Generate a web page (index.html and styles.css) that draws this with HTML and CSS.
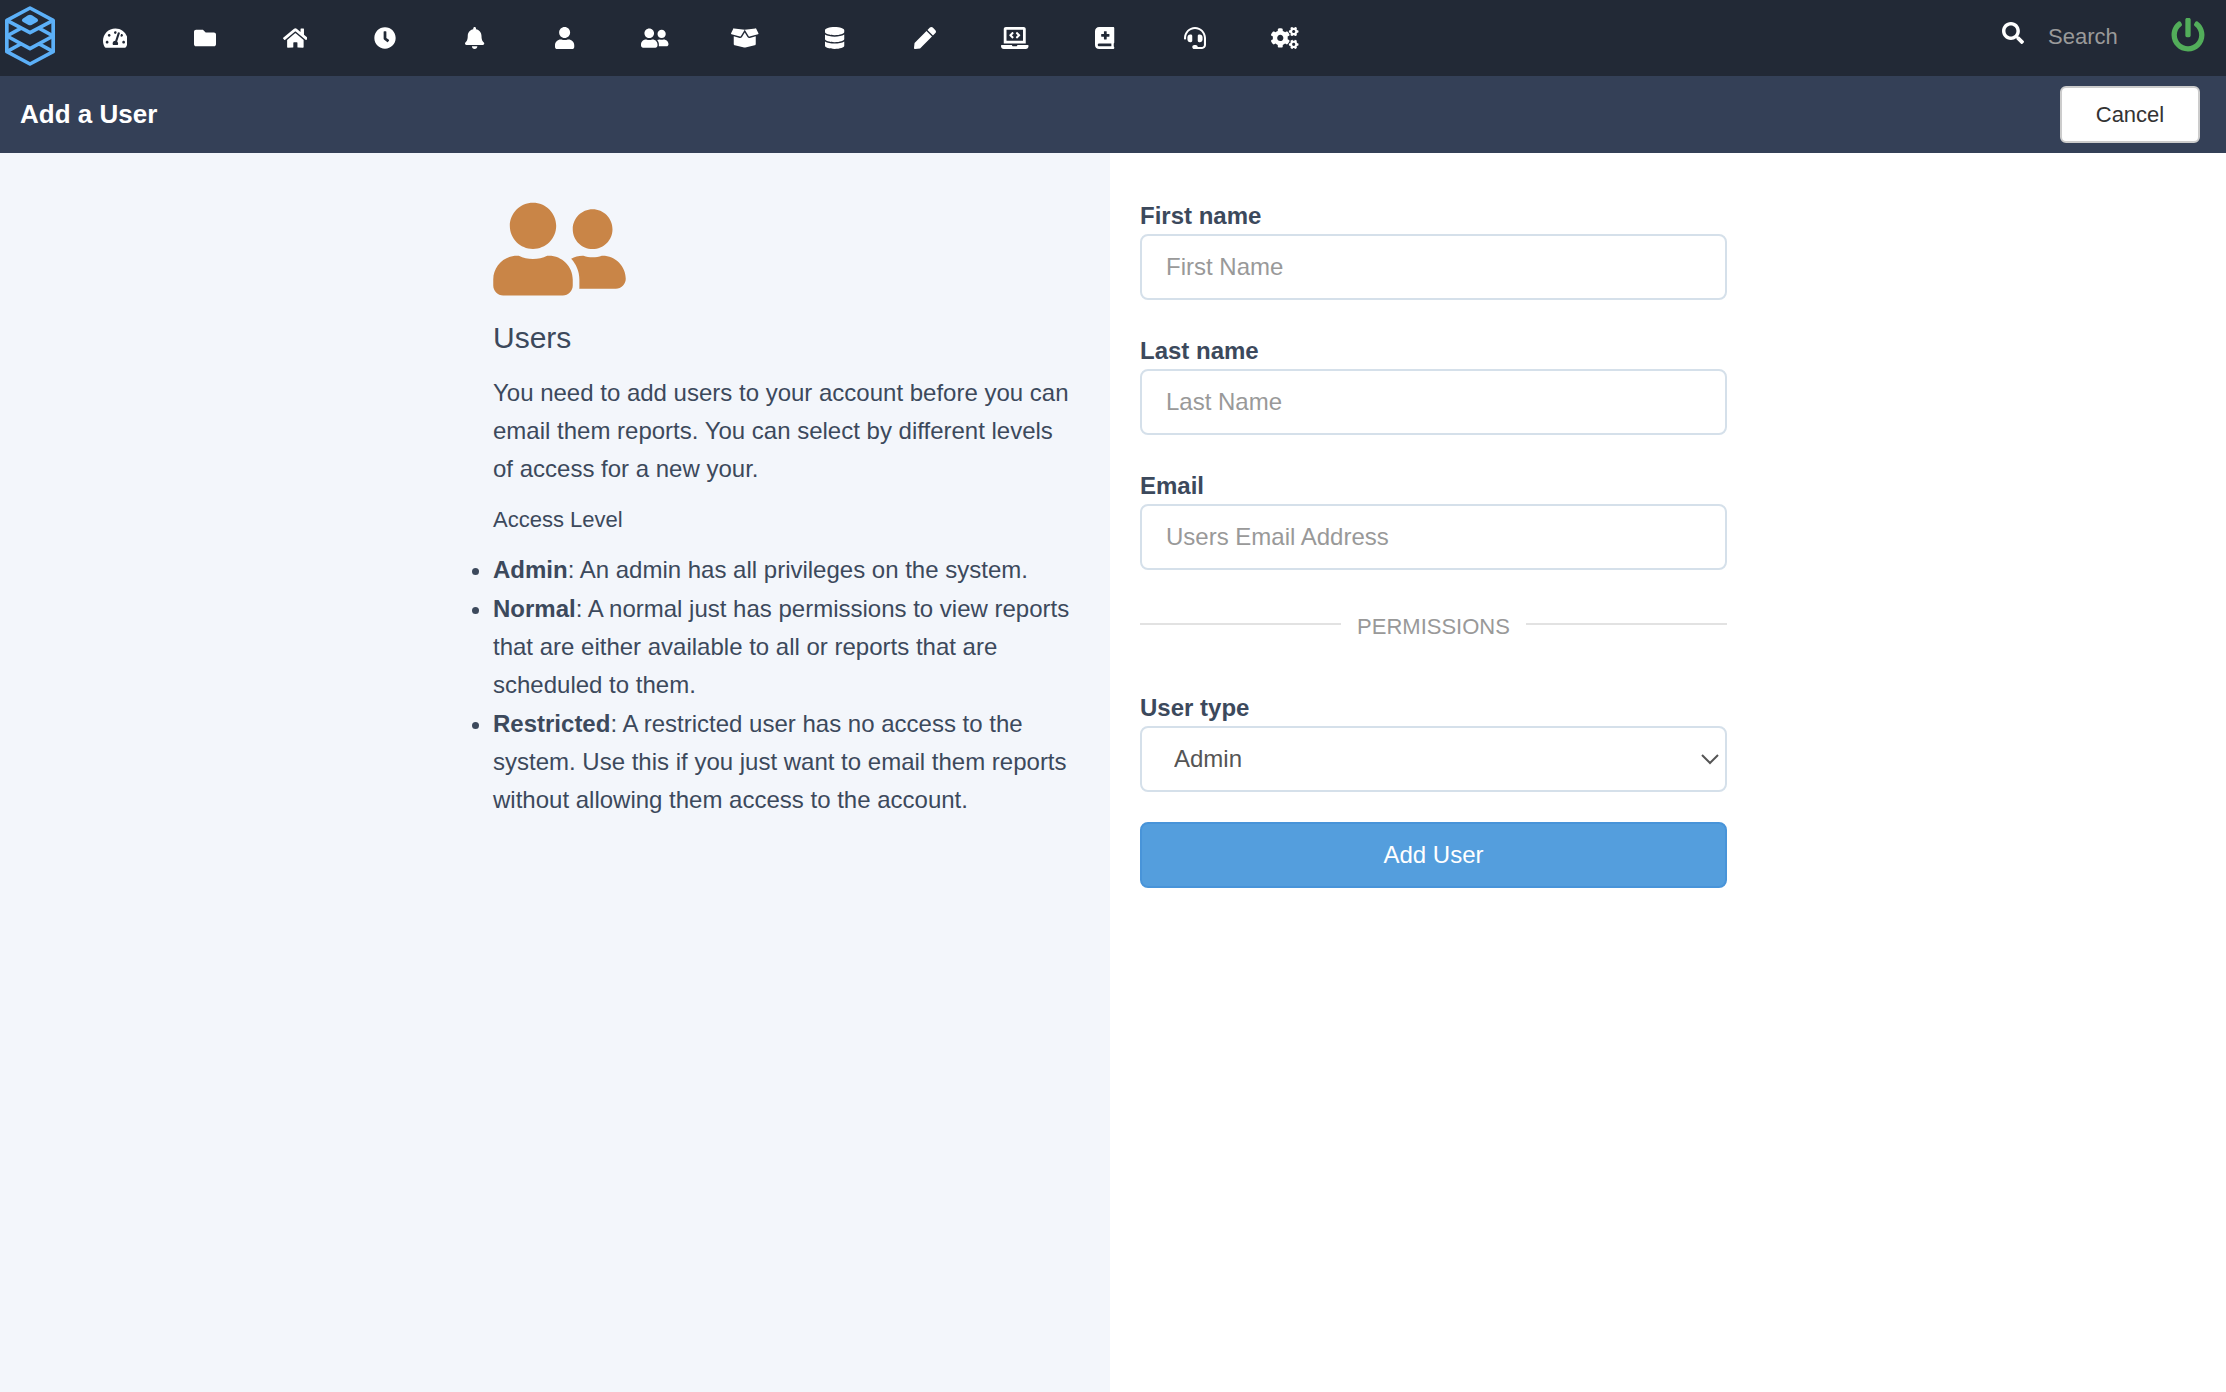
FILE: index.html
```html
<!DOCTYPE html>
<html lang="en">
<head>
<meta charset="utf-8">
<meta name="viewport" content="width=device-width, initial-scale=1">
<title>Add a User</title>
<link rel="stylesheet" href="styles.css">
</head>
<body>
<header class="topbar">
  <a class="logo" href="#" aria-label="Home">
    <svg viewBox="15 18 150 180" width="50" height="60" aria-hidden="true">
      <g fill="none" stroke="currentColor" stroke-width="11" stroke-linejoin="round">
        <path d="M90 24L159.500 61V155L90 192L20.500 155V61Z"/>
        <path d="M20.500 61L90 98L159.500 61M62 85L20.500 108L90 146L159.500 108L118 85M62 132L20.500 155M118 132L159.500 155"/>
      </g>
      <path fill="currentColor" d="M84 46Q90 42 96 46L112 56Q117 60 112 65L96 74Q90 78 84 74L68 65Q63 60 68 56Z"/>
    </svg>
  </a>
  <nav class="nav" aria-label="Main">
    <a class="nav-item" href="#" aria-label="Dashboard"><svg class="icon" viewBox="0 0 576 512"><path d="M288 32C128.940 32 0 160.940 0 320c0 52.800 14.250 102.260 39.060 144.800 5.610 9.620 16.300 15.200 27.440 15.200h443c11.140 0 21.830-5.580 27.440-15.200C561.750 422.260 576 372.800 576 320c0-159.060-128.940-288-288-288zm0 64c14.710 0 26.580 10.130 30.320 23.650-1.110 2.260-2.640 4.230-3.450 6.670l-9.220 27.670c-5.130 3.490-10.970 6.010-17.640 6.010-17.670 0-32-14.330-32-32S270.330 96 288 96zM96 384c-17.670 0-32-14.330-32-32s14.330-32 32-32 32 14.330 32 32-14.330 32-32 32zm48-160c-17.670 0-32-14.330-32-32s14.330-32 32-32 32 14.330 32 32-14.330 32-32 32zm246.770-72.410l-61.330 184C343.130 347.330 352 364.540 352 384c0 11.720-3.380 22.550-8.880 32H232.880c-5.500-9.450-8.880-20.280-8.880-32 0-33.940 26.500-61.430 59.900-63.590l61.340-184.010c4.170-12.560 17.730-19.450 30.360-15.170 12.570 4.190 19.350 17.790 15.170 30.360zm14.660 57.200l15.520-46.550c3.470-1.290 7.130-2.230 11.050-2.230 17.670 0 32 14.330 32 32s-14.330 32-32 32c-11.380-.01-20.890-6.280-26.570-15.220zM480 384c-17.670 0-32-14.330-32-32s14.330-32 32-32 32 14.330 32 32-14.330 32-32 32z"/></svg></a>
    <a class="nav-item" href="#" aria-label="Folders"><svg class="icon" viewBox="0 0 512 512"><path d="M464 128H272l-64-64H48C21.490 64 0 85.490 0 112v288c0 26.510 21.490 48 48 48h416c26.510 0 48-21.490 48-48V176c0-26.510-21.490-48-48-48z"/></svg></a>
    <a class="nav-item" href="#" aria-label="Properties"><svg class="icon" viewBox="0 0 576 512"><path d="M280.370 148.260L96 300.110V464a16 16 0 0 0 16 16l112.060-.29a16 16 0 0 0 15.920-16V368a16 16 0 0 1 16-16h64a16 16 0 0 1 16 16v95.640a16 16 0 0 0 16 16.050L464 480a16 16 0 0 0 16-16V300L295.670 148.260a12.190 12.190 0 0 0-15.300 0zM571.600 251.470L488 182.560V44.050a12 12 0 0 0-12-12h-56a12 12 0 0 0-12 12v72.610L318.470 43a48 48 0 0 0-61 0L4.340 251.470a12 12 0 0 0-1.600 16.900l25.500 31A12 12 0 0 0 45.150 301l235.220-193.740a12.190 12.190 0 0 1 15.300 0L530.900 301a12 12 0 0 0 16.900-1.600l25.500-31a12 12 0 0 0-1.700-16.930z"/></svg></a>
    <a class="nav-item" href="#" aria-label="Schedule"><svg class="icon" viewBox="0 0 512 512"><path d="M256,8C119,8,8,119,8,256S119,504,256,504,504,393,504,256,393,8,256,8Zm92.490,313h0l-20,25a16,16,0,0,1-22.490,2.500h0l-67-49.720a40,40,0,0,1-15-31.230V112a16,16,0,0,1,16-16h32a16,16,0,0,1,16,16V256l58,42.500A16,16,0,0,1,348.490,321Z"/></svg></a>
    <a class="nav-item" href="#" aria-label="Alerts"><svg class="icon" viewBox="0 0 448 512"><path d="M224 512c35.320 0 63.970-28.650 63.970-64H160.030c0 35.350 28.650 64 63.970 64zm215.390-149.710c-19.320-20.760-55.470-51.990-55.470-154.290 0-77.700-54.480-139.900-127.940-155.160V32c0-17.670-14.320-32-31.980-32s-31.980 14.330-31.980 32v20.840C118.560 68.100 64.080 130.300 64.080 208c0 102.300-36.150 133.530-55.470 154.290-6 6.450-8.660 14.160-8.610 21.710.11 16.400 12.980 32 32.100 32h383.800c19.120 0 32-15.600 32.100-32 .05-7.550-2.610-15.270-8.610-21.710z"/></svg></a>
    <a class="nav-item" href="#" aria-label="Profile"><svg class="icon" viewBox="0 0 448 512"><path d="M224 256c70.700 0 128-57.300 128-128S294.700 0 224 0 96 57.300 96 128s57.300 128 128 128zm89.600 32h-16.700c-22.200 10.200-46.900 16-72.900 16s-50.600-5.800-72.900-16h-16.700C60.200 288 0 348.200 0 422.400V464c0 26.500 21.500 48 48 48h352c26.500 0 48-21.500 48-48v-41.600c0-74.200-60.200-134.400-134.400-134.400z"/></svg></a>
    <a class="nav-item" href="#" aria-label="Users"><svg class="icon" viewBox="0 0 640 512"><path id="users-shape" d="M192 256c61.900 0 112-50.100 112-112S253.900 32 192 32 80 82.100 80 144s50.100 112 112 112zm76.800 32h-8.300c-20.800 10-43.900 16-68.500 16s-47.600-6-68.500-16h-8.300C51.600 288 0 339.600 0 403.200V432c0 26.500 21.500 48 48 48h288c26.500 0 48-21.500 48-48v-28.800c0-63.600-51.600-115.200-115.200-115.200zM480 256c53 0 96-43 96-96s-43-96-96-96-96 43-96 96 43 96 96 96zm48 32h-3.800c-13.900 4.800-28.600 8-44.200 8s-30.300-3.200-44.200-8H432c-20.400 0-39.200 5.900-55.700 15.400 24.400 26.300 39.700 61.200 39.700 99.800v38.400c0 2.200-.5 4.300-.6 6.400H592c26.500 0 48-21.500 48-48 0-61.900-50.100-112-112-112z"/></svg></a>
    <a class="nav-item" href="#" aria-label="Packages"><svg class="icon" viewBox="0 0 640 512"><path d="M425.700 256c-16.900 0-32.800-9-41.400-23.400L320 126l-64.200 106.600c-8.700 14.500-24.600 23.500-41.500 23.500-4.500 0-9-.6-13.300-1.900L64 215v178c0 14.700 10 27.500 24.200 31l216.200 54.100c10.200 2.500 20.900 2.500 31 0L551.800 424c14.200-3.600 24.200-16.400 24.200-31V215l-137 39.100c-4.300 1.300-8.800 1.900-13.300 1.900zm212.600-112.200L586.800 41c-3.100-6.200-9.800-9.800-16.700-8.900L320 64l91.700 152.100c3.800 6.300 11.400 9.300 18.500 7.300l197.900-56.500c9.900-2.900 14.700-13.900 10.200-23.100zM53.200 41L1.700 143.800c-4.600 9.200.3 20.200 10.100 23l197.900 56.500c7.100 2 14.700-1 18.500-7.300L320 64 69.800 32.100c-6.900-.8-13.500 2.700-16.600 8.900z"/></svg></a>
    <a class="nav-item" href="#" aria-label="Data"><svg class="icon" viewBox="0 0 448 512"><path d="M448 73.143v45.714C448 159.143 347.667 192 224 192S0 159.143 0 118.857V73.143C0 32.857 100.333 0 224 0s224 32.857 224 73.143zM448 176v102.857C448 319.143 347.667 352 224 352S0 319.143 0 278.857V176c48.125 33.143 136.208 48.572 224 48.572S399.874 209.143 448 176zm0 160v102.857C448 479.143 347.667 512 224 512S0 479.143 0 438.857V336c48.125 33.143 136.208 48.572 224 48.572S399.874 369.143 448 336z"/></svg></a>
    <a class="nav-item" href="#" aria-label="Edit"><svg class="icon" viewBox="0 0 512 512"><path d="M290.740 93.240l128.020 128.020-277.990 277.990-114.140 12.600C11.350 513.540-1.560 500.620.14 485.340l12.700-114.220 277.900-277.880zm207.200-19.060l-60.110-60.110c-18.750-18.750-49.160-18.750-67.910 0l-56.550 56.550 128.020 128.020 56.550-56.550c18.750-18.760 18.750-49.160 0-67.910z"/></svg></a>
    <a class="nav-item" href="#" aria-label="Developers"><svg class="icon" viewBox="0 0 640 512"><path d="M255.030 261.650c6.250 6.250 16.380 6.250 22.630 0l11.310-11.310c6.250-6.250 6.250-16.380 0-22.630L253.250 192l35.710-35.720c6.250-6.250 6.250-16.380 0-22.630l-11.310-11.310c-6.250-6.250-16.380-6.250-22.630 0l-58.340 58.340c-6.250 6.250-6.250 16.380 0 22.630l58.350 58.340zm96.010-11.300l11.310 11.310c6.250 6.250 16.380 6.250 22.630 0l58.340-58.340c6.250-6.250 6.250-16.380 0-22.630l-58.340-58.340c-6.250-6.250-16.380-6.250-22.630 0l-11.310 11.310c-6.250 6.250-6.250 16.380 0 22.630L386.750 192l-35.710 35.720c-6.250 6.250-6.250 16.380 0 22.630zM624 416H381.540c-.74 19.810-14.710 32-32.740 32H288c-18.690 0-33.020-17.470-32.770-32H16c-8.800 0-16 7.200-16 16v16c0 35.200 28.800 64 64 64h512c35.200 0 64-28.800 64-64v-16c0-8.800-7.200-16-16-16zM576 48c0-26.400-21.600-48-48-48H112C85.600 0 64 21.600 64 48v336h512V48zm-64 272H128V64h384v256z"/></svg></a>
    <a class="nav-item" href="#" aria-label="Guides"><svg class="icon" viewBox="0 0 448 512"><path d="M448 358.400V25.600c0-16-9.600-25.600-25.600-25.600H96C41.600 0 0 41.600 0 96v320c0 54.400 41.600 96 96 96h326.400c12.800 0 25.600-9.600 25.600-25.600v-16q0-9.600-9.600-19.200c-3.200-16-3.200-60.800 0-73.600q9.600-4.800 9.600-19.200zM144 168a8 8 0 0 1 8-8h56v-56a8 8 0 0 1 8-8h48a8 8 0 0 1 8 8v56h56a8 8 0 0 1 8 8v48a8 8 0 0 1-8 8h-56v56a8 8 0 0 1-8 8h-48a8 8 0 0 1-8-8v-56h-56a8 8 0 0 1-8-8zm236.800 280H96c-16 0-32-12.800-32-32s12.800-32 32-32h284.800z"/></svg></a>
    <a class="nav-item" href="#" aria-label="Support"><svg class="icon" viewBox="0 0 512 512"><path d="M192 208c0-17.670-14.330-32-32-32h-16c-35.350 0-64 28.650-64 64v48c0 35.350 28.650 64 64 64h16c17.670 0 32-14.330 32-32V208zm176 144c35.350 0 64-28.650 64-64v-48c0-35.350-28.650-64-64-64h-16c-17.670 0-32 14.330-32 32v112c0 17.670 14.330 32 32 32h16zM256 0C113.180 0 4.580 118.830 0 256v16c0 8.840 7.160 16 16 16h16c8.840 0 16-7.160 16-16v-16c0-114.690 93.310-208 208-208s208 93.310 208 208h-.12c.08 2.430.12 165.720.12 165.720 0 23.350-18.930 42.280-42.280 42.280H320c0-26.510-21.490-48-48-48h-32c-26.510 0-48 21.490-48 48s21.490 48 48 48h181.720c49.860 0 90.280-40.420 90.280-90.280V256C507.420 118.830 398.820 0 256 0z"/></svg></a>
    <a class="nav-item" href="#" aria-label="Settings"><svg class="icon" viewBox="0 0 640 512"><path id="small-cog" d="M512.100 191l-8.200 14.300c-3 5.300-9.400 7.500-15.100 5.400-11.800-4.400-22.600-10.700-32.100-18.600-4.600-3.800-5.800-10.500-2.800-15.700l8.200-14.300c-6.900-8-12.300-17.300-15.900-27.400h-16.500c-6 0-11.200-4.300-12.200-10.300-2-12-2.100-24.600 0-37.100 1-6 6.200-10.400 12.200-10.400h16.500c3.600-10.100 9-19.400 15.900-27.400l-8.200-14.300c-3-5.200-1.900-11.900 2.800-15.700 9.500-7.900 20.400-14.200 32.100-18.600 5.700-2.100 12.100.1 15.100 5.400l8.200 14.300c10.500-1.900 21.200-1.900 31.700 0L552 6.300c3-5.300 9.400-7.500 15.100-5.400 11.800 4.400 22.600 10.700 32.100 18.600 4.600 3.800 5.800 10.500 2.800 15.700l-8.200 14.300c6.900 8 12.300 17.300 15.900 27.400h16.500c6 0 11.200 4.300 12.200 10.300 2 12 2.100 24.600 0 37.100-1 6-6.200 10.400-12.200 10.400h-16.500c-3.600 10.100-9 19.400-15.900 27.400l8.200 14.300c3 5.200 1.900 11.900-2.800 15.700-9.500 7.900-20.400 14.200-32.100 18.600-5.700 2.100-12.100-.1-15.100-5.400l-8.200-14.300c-10.400 1.900-21.200 1.900-31.700 0zm-10.500-58.800c38.500 29.600 82.400-14.300 52.800-52.800-38.500-29.700-82.400 14.300-52.800 52.800z"/><use href="#small-cog" y="299"/><path d="M386.300 286.100l33.700 16.800c10.100 5.800 14.500 18.100 10.500 29.100-8.900 24.200-26.400 46.400-42.600 65.800-7.400 8.900-20.200 11.100-30.300 5.300l-29.100-16.800c-16 13.700-34.600 24.600-54.900 31.700v33.600c0 11.600-8.300 21.600-19.700 23.600-24.600 4.200-50.400 4.400-75.900 0-11.500-2-20-11.900-20-23.600V418c-20.300-7.200-38.900-18-54.900-31.700L74 403c-10 5.800-22.900 3.600-30.300-5.300-16.200-19.400-33.300-41.600-42.200-65.700-4-10.900.4-23.200 10.500-29.100l33.300-16.800c-3.900-20.900-3.900-42.400 0-63.400L12 205.800c-10.100-5.800-14.600-18.100-10.500-29 8.900-24.200 26-46.400 42.200-65.800 7.400-8.900 20.200-11.100 30.300-5.300l29.100 16.800c16-13.700 34.600-24.600 54.900-31.700V57.100c0-11.500 8.200-21.500 19.600-23.500 24.600-4.200 50.500-4.400 76-.1 11.500 2 20 11.900 20 23.600v33.600c20.300 7.200 38.900 18 54.900 31.700l29.100-16.800c10-5.800 22.900-3.600 30.300 5.300 16.200 19.400 33.200 41.600 42.100 65.800 4 10.900.1 23.200-10 29.100l-33.700 16.800c3.900 21 3.900 42.500 0 63.500zm-117.600 21.100c59.200-77-28.700-164.900-105.700-105.700-59.200 77 28.700 164.900 105.700 105.700z"/></svg></a>
  </nav>
  <form class="search" role="search">
    <button class="search-button" type="button" aria-label="Search"><svg class="icon" viewBox="0 0 512 512"><path d="M505 442.700L405.300 343c-4.500-4.500-10.600-7-17-7H372c27.600-35.300 44-79.700 44-128C416 93.100 322.900 0 208 0S0 93.100 0 208s93.100 208 208 208c48.300 0 92.700-16.400 128-44v16.300c0 6.400 2.500 12.500 7 17l99.700 99.700c9.400 9.400 24.600 9.400 33.900 0l28.300-28.300c9.400-9.400 9.400-24.600.1-34zM208 336c-70.700 0-128-57.200-128-128 0-70.700 57.200-128 128-128 70.700 0 128 57.200 128 128 0 70.700-57.200 128-128 128z"/></svg></button>
    <input class="search-input" type="text" placeholder="Search" aria-label="Search">
  </form>
  <a class="power" href="#" aria-label="Log out"><svg viewBox="0 0 512 512" width="34" height="34" fill="currentColor"><path d="M400 54.100c63 45 104 118.600 104 201.900 0 136.800-110.800 247.700-247.500 248C120 504.300 8.200 393 8 256.400 7.900 173.100 48.900 99.300 111.800 54.200c11.700-8.300 28-4.800 35 7.700L162.600 90c5.900 10.500 3.100 23.800-6.600 31-41.500 30.800-68 79.600-68 134.900-.1 92.300 74.500 168.100 168 168.100 91.600 0 168.600-74.200 168-169.100-.3-51.800-24.700-101.800-68.100-134-9.700-7.200-12.400-20.500-6.500-30.900l15.800-28.100c7-12.400 23.200-16.100 34.800-7.800zM296 264V24c0-13.300-10.700-24-24-24h-32c-13.300 0-24 10.700-24 24v240c0 13.300 10.700 24 24 24h32c13.300 0 24-10.700 24-24z"/></svg></a>
</header>

<div class="titlebar">
  <h1 class="title">Add a User</h1>
  <button class="cancel" type="button">Cancel</button>
</div>

<main class="panels">
  <section class="info">
    <div class="column">
      <svg class="info-icon" viewBox="0 0 640 512" aria-hidden="true"><use href="#users-shape"/></svg>
      <h2 class="info-title">Users</h2>
      <p class="info-text">You need to add users to your account before you can email them reports. You can select by different levels of access for a new your.</p>
      <h3 class="info-subtitle">Access Level</h3>
      <ul class="levels">
        <li><strong>Admin</strong>: An admin has all privileges on the system.</li>
        <li><strong>Normal</strong>: A normal just has permissions to view reports that are either available to all or reports that are scheduled to them.</li>
        <li><strong>Restricted</strong>: A restricted user has no access to the system. Use this if you just want to email them reports without allowing them access to the account.</li>
      </ul>
    </div>
  </section>
  <section class="entry">
    <form class="column">
      <div class="field">
        <label for="first-name">First name</label>
        <input class="control" id="first-name" type="text" placeholder="First Name">
      </div>
      <div class="field">
        <label for="last-name">Last name</label>
        <input class="control" id="last-name" type="text" placeholder="Last Name">
      </div>
      <div class="field">
        <label for="email">Email</label>
        <input class="control" id="email" type="email" placeholder="Users Email Address">
      </div>
      <div class="divider">PERMISSIONS</div>
      <div class="field">
        <label for="user-type">User type</label>
        <div class="select">
          <select class="control" id="user-type">
            <option>Admin</option>
            <option>Normal</option>
            <option>Restricted</option>
          </select>
          <svg class="chevron" viewBox="0 0 18 12" width="18" height="12" aria-hidden="true"><path d="M1 2L9 10L17 2" fill="none" stroke="currentColor" stroke-width="2"/></svg>
        </div>
      </div>
      <button class="submit" type="button">Add User</button>
    </form>
  </section>
</main>
</body>
</html>
```
FILE: styles.css
```css
* {
  box-sizing: border-box;
}

body {
  margin: 0;
  min-height: 100vh;
  display: flex;
  flex-direction: column;
  background: #fff;
  color: #3c495c;
  font-family: "Liberation Sans", Arial, Helvetica, sans-serif;
  font-size: 24px;
  line-height: 38px;
}

h1, h2, h3, p, ul {
  margin: 0;
}

input, select, button {
  font: inherit;
}

/* Top navigation */
.topbar {
  display: flex;
  align-items: center;
  min-height: 76px;
  padding: 0 21px 0 5px;
  background: #222936;
  color: #fff;
}

.logo {
  display: flex;
  margin: 0 15px 4px 0;
  color: #5cb0f8;
}

.nav {
  display: flex;
  flex: 1;
}

.nav-item {
  display: flex;
  justify-content: center;
  width: 90px;
  color: inherit;
}

.icon {
  display: block;
  height: 22px;
  fill: currentColor;
}

.search {
  display: flex;
  align-items: center;
  gap: 24px;
}

.search-button {
  padding: 0 0 10px;
  border: 0;
  background: none;
  color: inherit;
}

.search-input {
  width: 123px;
  padding: 0 0 2px;
  border: 0;
  background: none;
  color: #fff;
  font-size: 22px;
}

.search-input::placeholder {
  color: #9a9a9a;
  opacity: 1;
}

.power {
  display: flex;
  padding-bottom: 6px;
  color: #52ad5a;
}

/* Page title */
.titlebar {
  display: flex;
  align-items: center;
  justify-content: space-between;
  min-height: 77px;
  padding: 0 26px 0 20px;
  background: #344057;
}

.title {
  padding-bottom: 2px;
  color: #fff;
  font-size: 26px;
}

.cancel {
  width: 140px;
  height: 57px;
  border: 2px solid #ccc;
  border-radius: 6px;
  background: #fff;
  color: #333;
  font-size: 22px;
}

/* Two halves */
.panels {
  flex: 1;
  display: grid;
  grid-template-columns: 1fr 1fr;
  padding-right: 6px;
}

.info {
  display: flex;
  justify-content: flex-end;
  padding: 43px 30px;
  background: #f3f6fb;
}

.entry {
  padding: 45px 30px;
}

.column {
  width: 100%;
  max-width: 587px;
}

.info-icon {
  display: block;
  width: 133px;
  height: 106px;
  margin-bottom: 17px;
  fill: #c98547;
}

.info-title {
  margin-bottom: 17px;
  font-size: 30px;
  font-weight: 500;
}

.info-text {
  margin-bottom: 13px;
  padding-right: 8px;
}

.info-subtitle {
  margin-bottom: 12px;
  font-size: 22px;
  font-weight: 500;
}

.levels {
  padding: 0;
}

.levels li + li {
  margin-top: 1px;
}

/* Form */
.field label {
  display: block;
  font-weight: bold;
  line-height: 36px;
}

.field + .field {
  margin-top: 33px;
}

.control {
  display: block;
  width: 100%;
  height: 66px;
  padding: 0 24px;
  border: 2px solid #d5e0ea;
  border-radius: 8px;
  background: #fff;
  color: #555;
}

.control::placeholder {
  color: #999;
  opacity: 1;
}

.divider {
  display: flex;
  align-items: center;
  gap: 16px;
  margin: 38px 0 44px;
  color: #999;
  font-size: 22px;
}

.divider::before,
.divider::after {
  content: "";
  flex: 1;
  height: 2px;
  margin-bottom: 6px;
  background: #e2e2e2;
}

.select {
  display: grid;
  align-items: center;
}

.select .control,
.chevron {
  grid-area: 1 / 1;
}

.select .control {
  padding: 0 32px;
  appearance: none;
}

.chevron {
  justify-self: end;
  margin-right: 8px;
  color: #555;
  pointer-events: none;
}

.submit {
  width: 100%;
  height: 66px;
  margin-top: 30px;
  border: 2px solid #4894d9;
  border-radius: 8px;
  background: #549edd;
  color: #fff;
}
```
